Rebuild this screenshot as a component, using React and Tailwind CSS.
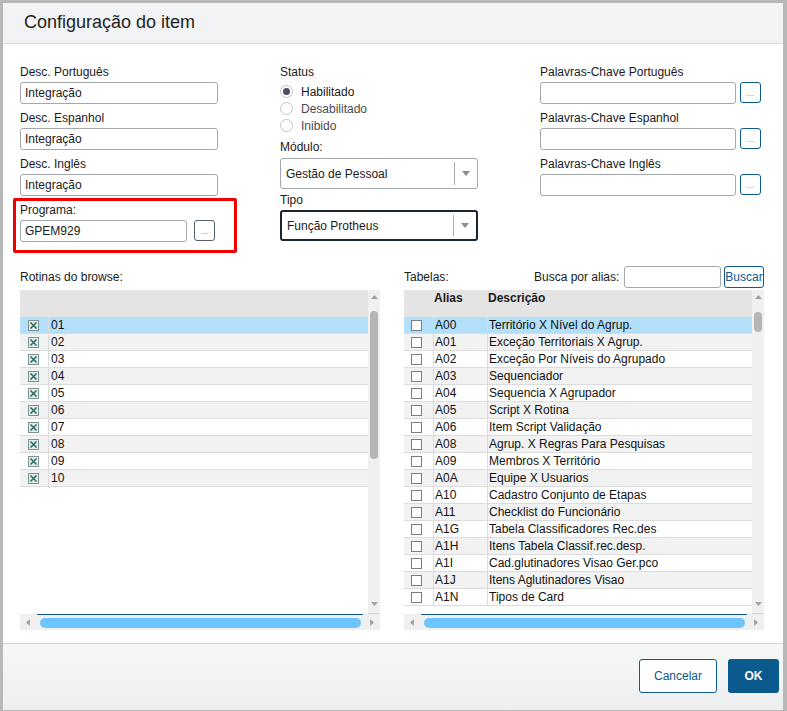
import React from "react";

const tables = [
  ["A00", "Território X Nível do Agrup."],
  ["A01", "Exceção Territoriais X Agrup."],
  ["A02", "Exceção Por Níveis do Agrupado"],
  ["A03", "Sequenciador"],
  ["A04", "Sequencia X Agrupador"],
  ["A05", "Script X Rotina"],
  ["A06", "Item Script Validação"],
  ["A08", "Agrup. X Regras Para Pesquisas"],
  ["A09", "Membros X Território"],
  ["A0A", "Equipe X Usuarios"],
  ["A10", "Cadastro Conjunto de Etapas"],
  ["A11", "Checklist do Funcionário"],
  ["A1G", "Tabela Classificadores Rec.des"],
  ["A1H", "Itens Tabela Classif.rec.desp."],
  ["A1I", "Cad.glutinadores Visao Ger.pco"],
  ["A1J", "Itens Aglutinadores Visao"],
  ["A1N", "Tipos de Card"],
];

const rotinas = ["01", "02", "03", "04", "05", "06", "07", "08", "09", "10"];

function Label({ children, className = "" }) {
  return <div className={"h-[16px] leading-[16px] text-[12px] text-[#1a1a1a] " + className}>{children}</div>;
}

function TextInput({ value = "", className = "" }) {
  return (
    <div className={"h-[22px] border border-[#a3a8ad] rounded-[3px] bg-white flex items-center pl-[4px] text-[12px] text-[#1a1a1a] " + className}>
      {value}
    </div>
  );
}

function DotsButton({ dark = false }) {
  return (
    <div
      className={
        "w-[21px] h-[21px] rounded-[3px] bg-white border flex items-end justify-center pb-[4px] text-[9px] leading-[9px] text-[#8d99a5] " +
        (dark ? "border-[#56606b]" : "border-[#0c5a8e]")
      }
    >
      ...
    </div>
  );
}

function Radio({ checked, label, dim }) {
  return (
    <div className="h-[17px] flex items-center">
      <div className="w-[13px] h-[13px] rounded-full border border-[#c4c4c4] bg-white flex items-center justify-center">
        {checked && <div className="w-[7px] h-[7px] rounded-full bg-[#4a5163]" />}
      </div>
      <span className={"ml-[8px] text-[12px] " + (dim ? "text-[#4a4a4a]" : "text-[#1a1a1a]")}>{label}</span>
    </div>
  );
}

function Arrow() {
  return (
    <svg width="8" height="5" viewBox="0 0 8 5">
      <path d="M0 0H8L4 5Z" fill="#8c8c8c" />
    </svg>
  );
}

function Select({ value, focused }) {
  return (
    <div
      className={
        "h-[31px] rounded-[3px] bg-white flex items-center " +
        (focused ? "border-2 border-[#1b2431]" : "border border-[#a3a8ad]")
      }
    >
      <div className="flex-1 pl-[5px] text-[12px] text-[#1a1a1a]">{value}</div>
      <div className="w-px self-stretch my-[3px] bg-[#a9a9a9]" />
      <div className="w-[22px] flex items-center justify-center">
        <Arrow />
      </div>
    </div>
  );
}

function XCheck() {
  return (
    <svg width="11" height="11" viewBox="0 0 11 11">
      <rect x="0.5" y="0.5" width="10" height="10" fill="#e3ecea" stroke="#7c9593" />
      <path d="M2.5 2.5L8.5 8.5M8.5 2.5L2.5 8.5" stroke="#2c6d68" strokeWidth="1.6" />
    </svg>
  );
}

function EmptyCheck() {
  return (
    <svg width="11" height="11" viewBox="0 0 11 11">
      <rect x="0.5" y="0.5" width="10" height="10" fill="#ffffff" stroke="#7d7d7d" />
    </svg>
  );
}

function rowBg(i) {
  if (i === 0) return "bg-[#b3dffa]";
  return i % 2 === 1 ? "bg-[#f2f2f2]" : "bg-white";
}

function VScroll({ thumbTop, thumbH }) {
  return (
    <div className="w-[12px] h-full bg-[#f0f0f0] border-b border-[#d2d2d2] flex flex-col items-center pt-[5px] pb-[7px]">
      <svg width="7" height="4" viewBox="0 0 7 4">
        <path d="M0 4L3.5 0L7 4Z" fill="#a3a3a3" />
      </svg>
      <div className="w-[8px] rounded-[4px] bg-[#b5b5b5]" style={{ marginTop: thumbTop, height: thumbH }} />
      <div className="mt-auto">
        <svg width="7" height="4" viewBox="0 0 7 4">
          <path d="M0 0L3.5 4L7 0Z" fill="#a3a3a3" />
        </svg>
      </div>
    </div>
  );
}

function HScroll() {
  return (
    <div className="h-[16px] bg-[#f0f0f0] flex flex-col">
      <div className="mx-[17px] h-px bg-[#0c5a8e]" />
      <div className="h-[15px] flex items-center pl-[6px]">
        <svg width="4" height="7" viewBox="0 0 4 7">
          <path d="M4 0V7L0 3.5Z" fill="#a3a3a3" />
        </svg>
        <div className="ml-[10px] w-[321px] h-[10px] rounded-full bg-[#6ec4fd]" />
        <div className="ml-[9px]">
          <svg width="4" height="7" viewBox="0 0 4 7">
            <path d="M0 0V7L4 3.5Z" fill="#a3a3a3" />
          </svg>
        </div>
      </div>
    </div>
  );
}

function Grid({ header, children, thumbTop, thumbH }) {
  return (
    <div className="w-[360px] h-[340px] flex flex-col bg-white">
      <div className="flex h-[324px]">
        <div className="w-[348px] h-full flex flex-col overflow-hidden">
          <div className="h-[27px] shrink-0 bg-[#e4e4e4] flex items-start text-[12px] font-bold text-[#1a1a1a] leading-[14px]">
            {header}
          </div>
          {children}
        </div>
        <VScroll thumbTop={thumbTop} thumbH={thumbH} />
      </div>
      <HScroll />
    </div>
  );
}

export default function App() {
  return (
    <div className="w-[787px] h-[711px] bg-[#b8b8b8] pt-[3px] pl-[3px] pr-[4px] pb-[1px] font-['Liberation_Sans',Arial,sans-serif]">
      <div className="w-[780px] h-[707px] bg-white flex flex-col">
        <div className="h-[41px] shrink-0 bg-[#f2f3f4] border-b border-[#d6d6d6] flex items-center pl-[21px] pb-[1px] text-[18px] text-[#1f1f1f]">
          Configuração do item
        </div>

        <div className="flex-1 pl-[17px] pt-[20px]">
          <div className="flex">
            <div className="w-[198px] flex flex-col">
              <Label>Desc. Português</Label>
              <TextInput className="mt-[2px]" value="Integração" />
              <Label className="mt-[6px]">Desc. Espanhol</Label>
              <TextInput className="mt-[2px]" value="Integração" />
              <Label className="mt-[6px]">Desc. Inglês</Label>
              <TextInput className="mt-[2px]" value="Integração" />
              <div className="mt-[2px] -ml-[7px] w-[224px] border-[3px] border-[#f00000] rounded-[2px] pt-[1px] pl-[4px] pb-[8px]">
                <Label>Programa:</Label>
                <div className="mt-[2px] flex items-start">
                  <TextInput className="w-[167px]" value="GPEM929" />
                  <div className="ml-[7px]">
                    <DotsButton dark />
                  </div>
                </div>
              </div>
            </div>

            <div className="ml-[62px] w-[198px] flex flex-col">
              <Label>Status</Label>
              <div className="mt-[3px] flex flex-col">
                <Radio checked label="Habilitado" />
                <Radio label="Desabilitado" dim />
                <Radio label="Inibido" dim />
              </div>
              <Label className="mt-[5px]">Módulo:</Label>
              <div className="mt-[3px]">
                <Select value="Gestão de Pessoal" />
              </div>
              <Label className="mt-[3px]">Tipo</Label>
              <div className="mt-[2px]">
                <Select value="Função Protheus" focused />
              </div>
            </div>

            <div className="ml-[62px] w-[221px] flex flex-col">
              <Label>Palavras-Chave Português</Label>
              <div className="mt-[2px] flex items-start">
                <TextInput className="w-[197px]" />
                <div className="ml-[4px]"><DotsButton /></div>
              </div>
              <Label className="mt-[6px]">Palavras-Chave Espanhol</Label>
              <div className="mt-[2px] flex items-start">
                <TextInput className="w-[197px]" />
                <div className="ml-[4px]"><DotsButton /></div>
              </div>
              <Label className="mt-[6px]">Palavras-Chave Inglês</Label>
              <div className="mt-[2px] flex items-start">
                <TextInput className="w-[197px]" />
                <div className="ml-[4px]"><DotsButton /></div>
              </div>
            </div>
          </div>

          <div className="mt-[13px] flex">
            <div className="w-[360px] flex flex-col">
              <div className="h-[22px] flex items-center text-[12px] text-[#1a1a1a]">Rotinas do browse:</div>
              <div className="mt-[2px]">
                <Grid header={null} thumbTop={12} thumbH={148}>
                  {rotinas.map((r, i) => (
                    <div key={r} className={"h-[17px] shrink-0 flex border-b border-[#dcdcdc] " + rowBg(i)}>
                      <div className="w-[29px] border-r border-[#dcdcdc] flex items-center pl-[8px]">
                        <XCheck />
                      </div>
                      <div className="flex-1 flex items-center pl-[2px] text-[12px] text-[#111]">{r}</div>
                    </div>
                  ))}
                </Grid>
              </div>
            </div>

            <div className="ml-[24px] w-[360px] flex flex-col">
              <div className="h-[22px] flex items-center text-[12px] text-[#1a1a1a]">
                <div className="w-[130px]">Tabelas:</div>
                <div className="w-[90px]">Busca por alias:</div>
                <div className="w-[97px] h-[22px] border border-[#a3a8ad] rounded-[3px] bg-white" />
                <div className="ml-[3px] w-[40px] h-[22px] border border-[#0c5a8e] rounded-[3px] bg-white flex items-center justify-center text-[12px] text-[#0c5a8e]">
                  Buscar
                </div>
              </div>
              <div className="mt-[2px]">
                <Grid
                  thumbTop={13}
                  thumbH={20}
                  header={
                    <>
                      <div className="w-[30px]" />
                      <div className="w-[54px] pt-[1px]">Alias</div>
                      <div className="pt-[1px]">Descrição</div>
                    </>
                  }
                >
                  {tables.map(([a, d], i) => (
                    <div key={a} className={"h-[17px] shrink-0 flex border-b border-[#dcdcdc] " + rowBg(i)}>
                      <div className="w-[30px] border-r border-[#dcdcdc] flex items-center pl-[7px]">
                        <EmptyCheck />
                      </div>
                      <div className="w-[54px] border-r border-[#dcdcdc] flex items-center pl-[1px] text-[12px] text-[#111]">{a}</div>
                      <div className="flex-1 flex items-center pl-[1px] text-[12px] text-[#111] whitespace-nowrap">{d}</div>
                    </div>
                  ))}
                </Grid>
              </div>
            </div>
          </div>
        </div>

        <div className="h-[67px] shrink-0 border-t border-[#d4d4d4] bg-gradient-to-b from-[#f6f7f7] to-[#eeeff0] flex justify-end items-start pt-[15px] pr-[4px]">
          <div className="w-[78px] h-[34px] rounded-[3px] border border-[#0c5a8e] bg-white flex items-center justify-center text-[12px] text-[#0c5a8e]">
            Cancelar
          </div>
          <div className="ml-[11px] w-[51px] h-[34px] rounded-[3px] bg-[#0b5a8e] flex items-center justify-center text-[12px] font-bold text-white">
            OK
          </div>
        </div>
      </div>
    </div>
  );
}
